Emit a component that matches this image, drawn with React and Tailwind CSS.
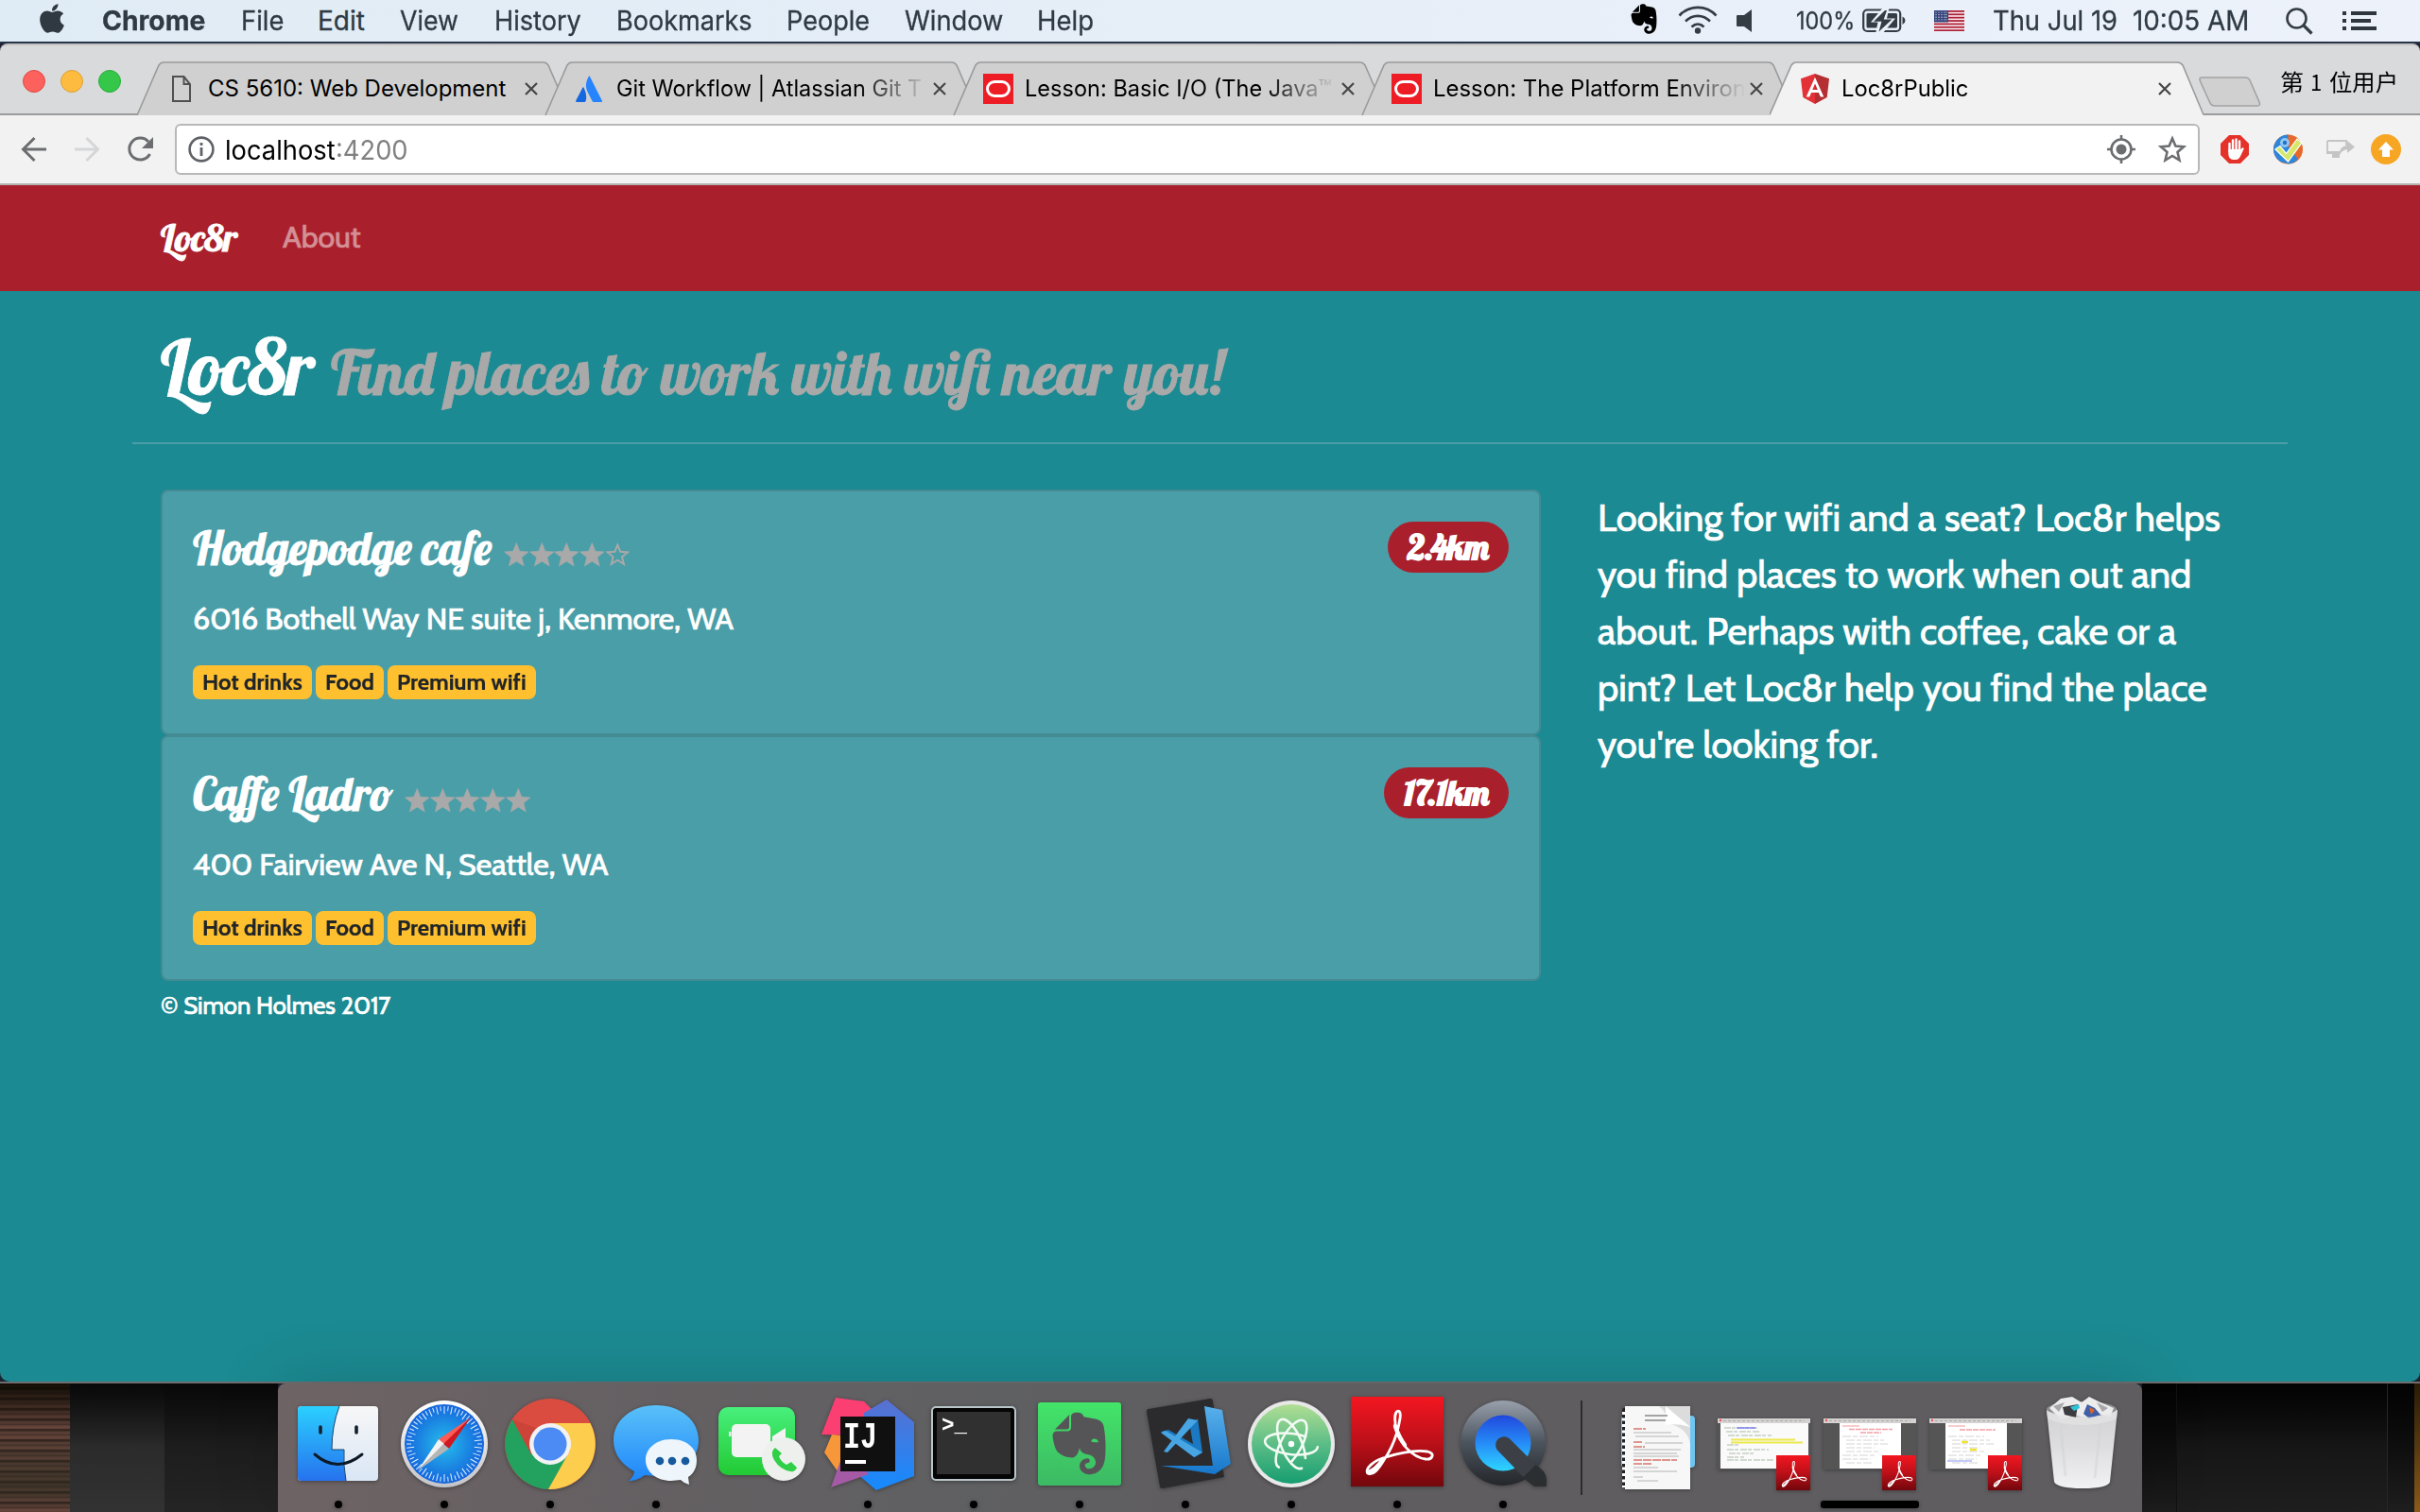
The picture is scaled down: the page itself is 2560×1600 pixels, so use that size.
import React, { useLayoutEffect, useRef, useState } from "react";
import { FaApple, FaEvernote } from "react-icons/fa";

/* Single line of text whose glyphs are condensed or widened to fill a given width. */
function Fit({ w, className = "", children }) {
  const ref = useRef(null);
  const [k, setK] = useState(1);
  useLayoutEffect(() => {
    setK(w / ref.current.offsetWidth);
  }, [w, children]);
  return (
    <span className={"inline-block shrink-0 whitespace-pre " + className} style={{ width: w }}>
      <span ref={ref} className="inline-block origin-left whitespace-pre" style={{ transform: `scaleX(${k})` }}>
        {children}
      </span>
    </span>
  );
}

const script = "font-['Lobster','Liberation_Serif',serif] [-webkit-text-stroke:0.8px_currentColor]";

/* ---------- menu bar ---------- */
const menus = [
  ["File", 45, "ml-[38px]"],
  ["Edit", 50, "ml-[36px]"],
  ["View", 62, "ml-[37px]"],
  ["History", 92, "ml-[38px]"],
  ["Bookmarks", 144, "ml-[37px]"],
  ["People", 88, "ml-[36px]"],
  ["Window", 104, "ml-[37px]"],
  ["Help", 60, "ml-[36px]"],
];

function MenuBar() {
  return (
    <div className="flex h-[46px] shrink-0 items-start border-b-2 border-[#26344a] bg-gradient-to-r from-[#e0ecf5] via-[#e6eef8] to-[#edf2fa] text-[28px] leading-[44px] text-[#2f3a44] [-webkit-text-stroke:0.3px_currentColor]">
      <FaApple className="ml-[38px] mt-[2px] h-[35px] w-[34px] text-[#303942]" />
      <Fit w={109} className="ml-[36px] font-bold">Chrome</Fit>
      {menus.map(([t, w, m]) => (
        <Fit key={t} w={w} className={m}>{t}</Fit>
      ))}
      <div className="ml-auto flex items-start pr-[46px]">
        <FaEvernote className="mt-[2px] h-[36px] w-[32px] text-black" />
        <svg className="ml-[20px] mt-[6px] h-[30px] w-[42px]" viewBox="0 0 42 30" fill="none" stroke="#343c44" strokeWidth="2.6">
          <path d="M1.5 10.5C12-1 30-1 40.500 10.500M8 16.500c7.500-7.500 18.500-7.500 26 0M14.500 22.500c4-4 9-4 13 0" />
          <circle cx="21" cy="26.500" r="3.200" fill="#343c44" stroke="none" />
        </svg>
        <svg className="ml-[20px] mt-[10px] h-[24px] w-[17px]" viewBox="0 0 17 24"><path d="M0 7q0-1 1-1h7l8-6v24l-8-6H1q-1 0-1-1z" fill="#343c44" /></svg>
        <Fit w={62} className="ml-[46px] text-[25px]">100%</Fit>
        <svg className="ml-[8px] mt-[9px] h-[26px] w-[46px]" viewBox="0 0 46 26">
          <rect x="1.200" y="1.500" width="39" height="22.500" rx="4" fill="none" stroke="#343c44" strokeWidth="2.200" />
          <rect x="4.500" y="5" width="32.500" height="15.500" rx="1.500" fill="#343c44" />
          <path d="M42.500 8.500q3 1.500 3 4.300t-3 4.300z" fill="#343c44" />
          <path d="M22 -1 9 14.500h7.500L14 27h7l14-16.500h-9L28.500-1z" fill="#eaf1f9" />
          <path d="M24 2 12 13.800h8.500L17.500 24.500 31.500 11.500h-8.800L26 2z" fill="#343c44" />
        </svg>
        <svg className="ml-[30px] mt-[11px] h-[22px] w-[32px]" viewBox="0 0 32 22">
          <rect width="32" height="22" fill="#f7eef0" />
          {[0, 1, 2, 3, 4, 5, 6].map((i) => <rect key={i} y={i * 3.38} width="32" height="1.800" fill="#b0213a" />)}
          <rect width="15" height="12.500" fill="#34437b" />
          {[2, 4.6, 7.2, 9.8].map((y) => [2, 5, 8, 11, 13].map((x) => <circle key={x + "-" + y} cx={x} cy={y} r=".6" fill="#fff" />))}
        </svg>
        <Fit w={132} className="ml-[30px]">Thu Jul 19</Fit>
        <Fit w={123} className="ml-[16px]">10:05 AM</Fit>
        <svg className="ml-[39px] mt-[8px] h-[29px] w-[29px]" viewBox="0 0 29 29" fill="none" stroke="#343c44" strokeWidth="2.600">
          <circle cx="11.500" cy="11.500" r="10" /><path d="m18.500 18.500 9 9" strokeWidth="3.200" />
        </svg>
        <svg className="ml-[31px] mt-[12px] h-[20px] w-[36px]" viewBox="0 0 36 20" fill="#2f363e">
          <path d="M0 0h4v4H0zM9 0h27v4H9zM0 8h4v4H0zM9 8h21v4H9zM0 16h4v4H0zM9 16h27v4H9z" />
        </svg>
      </div>
    </div>
  );
}

/* ---------- browser chrome ---------- */
const DocIcon = () => (
  <svg className="ml-[6px] h-[28px] w-[20px]" viewBox="0 0 20 28" fill="none" stroke="#505050" strokeWidth="2"><path d="M1 1h11.500L19 9v18H1zM12.500 1v8H19" /></svg>
);
const AtlassianIcon = () => (
  <svg className="ml-[1px] h-[28px] w-[28px]" viewBox="0 0 28 28">
    <path d="M14.500 0C9 8 11 14 13 18l4.500 9q.5 1 1.500 1h8q1.500 0 .8-1.500z" fill="#2684ff" />
    <path d="M8.500 12.500q-.7-.8-1.300.4L.2 26.500Q-.3 28 1 28h8.300q.8 0 1.200-.8 2.200-6-2-14.700z" fill="#1467e0" />
  </svg>
);
const OracleIcon = () => (
  <svg className="h-[32px] w-[32px]" viewBox="0 0 32 32"><rect width="32" height="32" fill="#ee1c25" /><rect x="4.500" y="8.500" width="23" height="15" rx="7.500" fill="none" stroke="#fff" strokeWidth="3" /></svg>
);
const AngularIcon = () => (
  <svg className="ml-[1px] h-[32px] w-[30px]" viewBox="0 0 30 32">
    <path d="M15 0 0 5.300 2.300 25 15 32z" fill="#e23237" /><path d="m15 0 15 5.300L27.700 25 15 32z" fill="#b52e31" />
    <path d="M15 3.800 5.700 24.600h3.500l1.900-4.700h7.800l1.900 4.700h3.500zm0 6.700 2.800 6.500h-5.600z" fill="#fff" />
  </svg>
);
const Close = () => (
  <svg className="ml-[1px] h-[14px] w-[14px] shrink-0" viewBox="0 0 14 14" stroke="#454545" strokeWidth="2.200"><path d="m1 1 12 12M13 1 1 13" /></svg>
);

const tabs = [
  { title: "CS 5610: Web Development", w: 315, icon: <DocIcon /> },
  { title: "Git Workflow | Atlassian Git T", w: 323, icon: <AtlassianIcon />, fade: true },
  { title: "Lesson: Basic I/O (The Java™", w: 325, icon: <OracleIcon />, fade: true },
  { title: "Lesson: The Platform Environ", w: 331, icon: <OracleIcon />, fade: true },
  { title: "Loc8rPublic", w: 134, icon: <AngularIcon />, active: true },
];

function Tab({ title, w, icon, fade, active }) {
  return (
    <div className={"relative -mr-[28px] h-[57px] w-[460px] shrink-0 " + (active ? "z-10" : "")}>
      <svg className="absolute inset-0 h-[59px] w-[460px]" viewBox="0 0 460 59">
        <path d={active ? "M0 59V57L1 55 23 4Q25 1 28 1H431Q435 1 437 4L459 55V59Z" : "M1 57 24 4Q26 1 29 1H431Q434 1 436 4L459 57Z"} fill={active ? "#f2f2f2" : "#d0d0d0"} />
        <path d={active ? "M0 56.500 23 4Q25 1 28 1H431Q435 1 437 4L459 56.500" : "M1 57 24 4Q26 1 29 1H431Q434 1 436 4L459 57"} fill="none" stroke="#9b9b9b" strokeWidth="1.600" />
      </svg>
      <div className="relative flex h-[57px] items-center pl-[32px] text-[24px] leading-[57px] text-black">
        <span className="flex w-[32px] shrink-0">{icon}</span>
        <span className={"ml-[12px] flex w-[334px] overflow-hidden " + (fade ? "[mask-image:linear-gradient(to_right,#000_76%,transparent_99%)]" : "")}>
          <Fit w={w}>{title}</Fit>
        </span>
        <Close />
      </div>
    </div>
  );
}

function BrowserChrome() {
  return (
    <div className="shrink-0">
      <div className="flex h-[76px] items-start rounded-t-[8px] border-t-2 border-[#c2c0c0] bg-[#d9dadc] shadow-[inset_0_-2px_0_#9b9b9b]">
        <div className="mt-[26px] flex w-[144px] shrink-0 gap-[16px] pl-[24px]">
          <i className="h-[24px] w-[24px] rounded-full border border-[#e14942] bg-[#fc615d]" />
          <i className="h-[24px] w-[24px] rounded-full border border-[#dea034] bg-[#fdbc40]" />
          <i className="h-[24px] w-[24px] rounded-full border border-[#2aad3c] bg-[#34c749]" />
        </div>
        <div className="mt-[17px] flex">{tabs.map((t) => <Tab key={t.title} {...t} />)}</div>
        <svg className="ml-[22px] mt-[33px] h-[32px] w-[66px] shrink-0" viewBox="0 0 66 32"><path d="M3 1h46q4 0 5.500 4L64 27q1.500 4-2 4H17q-4 0-5.500-4L1.500 5Q0 1 3 1z" fill="#d0d0d0" stroke="#a2a2a2" strokeWidth="1.600" /></svg>
        <span className="ml-[20px] mt-[18px] flex font-['Noto_Sans_CJK_SC',sans-serif] text-[24px] leading-[40px] text-black">
          <Fit w={25}>第</Fit>
          <Fit w={12} className="ml-[7px]">1</Fit>
          <Fit w={73} className="ml-[8px]">位用户</Fit>
        </span>
      </div>
      <div className="flex h-[74px] items-center border-b-2 border-[#b4b2b2] bg-[#f2f2f2] pl-[22px]">
        <svg className="h-[28px] w-[28px]" viewBox="0 0 28 28" fill="none" stroke="#6b6d70" strokeWidth="3"><path d="M27 14H3M14.500 2 2.500 14l12 12" /></svg>
        <svg className="ml-[28px] h-[28px] w-[28px]" viewBox="0 0 28 28" fill="none" stroke="#d5d6d8" strokeWidth="3"><path d="M1 14h24M13.500 2l12 12-12 12" /></svg>
        <svg className="ml-[28px] h-[28px] w-[29px]" viewBox="0 0 29 28"><path d="M24.500 19A11.500 11.500 0 1 1 23 6" fill="none" stroke="#6b6d70" strokeWidth="3" /><path d="M28 1v12H16z" fill="#6b6d70" /></svg>
        <div className="ml-[22px] flex h-[54px] w-[2142px] items-center rounded-[6px] border-2 border-[#b8b8b8] bg-white pl-[12px] pr-[12px] text-[28px] leading-[50px] text-black">
          <svg className="h-[28px] w-[28px]" viewBox="0 0 28 28"><circle cx="14" cy="14" r="12.400" fill="none" stroke="#5f6368" strokeWidth="2.600" /><path d="M12.600 12h2.800v9h-2.800zM12.600 7h2.800v3h-2.800z" fill="#5f6368" /></svg>
          <Fit w={117} className="ml-[11px] pt-[2px]">localhost</Fit>
          <Fit w={77} className="pt-[2px] text-[#808080]">:4200</Fit>
          <svg className="ml-auto h-[30px] w-[30px]" viewBox="0 0 30 30" fill="none" stroke="#6b6d70" strokeWidth="2.600"><circle cx="15" cy="15" r="10.500" /><circle cx="15" cy="15" r="5.500" fill="#6b6d70" stroke="none" /><path d="M15 0v5M15 25v5M0 15h5M25 15h5" /></svg>
          <svg className="ml-[24px] h-[30px] w-[30px]" viewBox="0 0 30 30" fill="none" stroke="#6b6d70" strokeWidth="2.600"><path d="m15 3.500 3.400 8 8.600.8-6.500 5.700 2 8.500L15 22l-7.500 4.500 2-8.500L3 12.300l8.600-.8z" /></svg>
        </div>
        <svg className="ml-[22px] h-[30px] w-[30px]" viewBox="0 0 30 30">
          <path d="M9 0h12l9 9v12l-9 9H9l-9-9V9z" fill="#e4322b" />
          <path d="M9.500 9v8M13 5.500v10M16.500 4.500v11M20 6.500v12" stroke="#fff" strokeWidth="2.400" strokeLinecap="round" /><path d="M8.300 15h12.900l2.600-2 1 1.200-3.400 7.300q-2 4.500-5.400 4.500h-2.300q-5.400 0-5.400-6.500z" fill="#fff" />
        </svg>
        <svg className="ml-[25px] h-[32px] w-[33px]" viewBox="0 0 33 32">
          <circle cx="16.500" cy="16" r="15.500" fill="#e8672a" /><path d="M16.500.5a15.500 15.500 0 0 0-8 28.800L17 31.500q7-1 10-5L16 12z" fill="#2f86d8" />
          <circle cx="13" cy="9" r="5" fill="#8cc7f5" /><circle cx="13" cy="9" r="2.200" fill="#2b6fc0" />
          <path d="m3 16 5-3.500 6.500 8L26 5l5 4-14.500 20z" fill="#d6e86a" stroke="#fff" strokeWidth="1.200" />
        </svg>
        <svg className="ml-[24px] h-[20px] w-[30px]" viewBox="0 0 30 20"><path d="M1 1h20v5M1 1v13h13" fill="none" stroke="#c4c4c4" strokeWidth="1.800" /><path d="M0 12h15v3H0zM6 15h8v4H6zM13 17q0-10 9-11V1l8 6.500-8 6.500v-4q-6 1-9 7z" fill="#c4c4c4" /></svg>
        <svg className="ml-[17px] h-[32px] w-[32px]" viewBox="0 0 32 32"><circle cx="16" cy="16" r="16" fill="#f6a623" /><path d="m16 8 8 8.500h-4V24h-8v-7.500H8z" fill="#fff" /></svg>
      </div>
    </div>
  );
}

/* ---------- page ---------- */
const STAR = "m13.3 0.500 3.500 8.700 9.300.7-7.200 5.900 2.300 9.200-7.900-5-7.900 5 2.300-9.200L.5 9.900l9.300-.7z";

function Stars({ n }) {
  return (
    <span className="mt-[25px] flex">
      {[0, 1, 2, 3, 4].map((i) => (
        <svg key={i} className="h-[26px] w-[26.700px] shrink-0" viewBox="0 0 26.700 26"><path d={i < n ? STAR : "m13.3 2.700 2.900 7.100 7.700.6-5.900 4.900 1.900 7.500-6.600-4.100-6.600 4.100 1.900-7.500-5.900-4.900 7.700-.6z"} fill={i < n ? "#a9a9a9" : "none"} stroke="#a9a9a9" strokeWidth={i < n ? 0.6 : 2} /></svg>
      ))}
    </span>
  );
}

function Place({ name, nameBox, stars, dist, distBox, address }) {
  return (
    <div className="h-[260px] rounded-[8px] border-2 border-[#448b94] bg-[#4a9ea8] px-[32px] pt-[29px]">
      <div className="flex h-[60px] items-start">
        <h4 className={"whitespace-pre pt-px text-[48px] leading-[60px] " + nameBox + " " + script}>{name}</h4>
        <Stars n={stars} />
        <span className={"ml-auto mt-[3px] flex h-[54px] justify-center whitespace-pre rounded-full bg-[#a9202c] text-[36px] font-bold leading-[54px] " + distBox + " " + script}>{dist}</span>
      </div>
      <div className="mt-[22px] h-[48px] whitespace-pre text-[32px] leading-[48px]">{address}</div>
      <div className="mt-[25px] flex gap-[4px] text-[24px] font-bold leading-[35px] text-[#212529] [-webkit-text-stroke:0.2px_currentColor]">
        {[["Hot drinks", 106], ["Food", 52], ["Premium wifi", 137]].map(([t, w]) => (
          <span key={t} className="h-[36px] rounded-[8px] bg-[#fec02f] px-[10px]"><Fit w={w}>{t}</Fit></span>
        ))}
      </div>
    </div>
  );
}

const blurb = [
  "Looking for wifi and a seat? Loc8r helps",
  "you find places to work when out and",
  "about. Perhaps with coffee, cake or a",
  "pint? Let Loc8r help you find the place",
  "you're looking for.",
];

function Page() {
  return (
    <div className="h-[1266px] shrink-0 rounded-b-[10px] bg-[#1c8a92] font-['Cabin','Lato',sans-serif] text-white [-webkit-text-stroke:0.7px_currentColor]">
      <nav className="flex h-[112px] items-start bg-[#a9202c] pl-[170px]">
        <span className={"mt-[25px] w-[82px] whitespace-pre text-[40px] leading-[60px] " + script}>Loc8r</span>
        <span className="ml-[47px] mt-[25px] text-[32px] leading-[60px] text-[#d48f95]">About</span>
      </nav>
      <header className="mx-[140px] flex h-[162px] items-baseline border-b-2 border-[#4a9ea8] pl-[30px] pt-[32px]">
        <h1 className={"w-[180px] whitespace-pre text-[80px] leading-[96px] " + script}>Loc8r</h1>
        <small className={"whitespace-pre text-[64px] leading-[80px] text-[#a9a9a9] " + script}>Find places to work with wifi near you!</small>
      </header>
      <main className="flex px-[170px] pt-[48px]">
        <section className="w-[1460px] shrink-0">
          <Place name="Hodgepodge cafe" nameBox="w-[329px]" stars={4} dist="2.4km" distBox="w-[128px]" address="6016 Bothell Way NE suite j, Kenmore, WA" />
          <Place name="Caffe Ladro" nameBox="w-[224px]" stars={5} dist="17.1km" distBox="w-[132px]" address="400 Fairview Ave N, Seattle, WA" />
          <footer className="pt-[2px] text-[25.600px] leading-[48px]">© Simon Holmes 2017</footer>
        </section>
        <aside className="ml-[60px] flex flex-col whitespace-pre text-[40px] leading-[60px]">
          {blurb.map((t) => <span key={t}>{t}</span>)}
        </aside>
      </main>
    </div>
  );
}

/* ---------- dock ---------- */
function AcrobatMark() {
  return (
    <g fill="none" stroke="#fff" strokeLinecap="round" strokeLinejoin="round">
      <path d="M47 28C45 14 54 12 52 24C50 37 46 52 35 68C29 78 23 85 18 82C14 78 24 68 37 65C53 60 68 57 81 59C90 61 86 68 79 67C65 65 52 51 47 34Z" strokeWidth="2.800" />
      <path d="M47 32q4 12 10 20M18 81q8-2 16-14" strokeWidth="4.200" />
    </g>
  );
}

function Thumb({ x, kind }) {
  return (
    <g transform={`translate(${x} 1501)`}>
      <rect width="98" height="54" fill="#555" /><rect width="98" height="5" fill="#d6d2d2" /><circle cx="3" cy="2" r="1.200" fill="#e55" />
      <path d="M6 2.500h86" stroke="#aaa" strokeDasharray="3 2" />
      {kind === 0 ? <rect x="3" y="5" width="93" height="48" fill="#fafafa" /> : <rect x="17" y="5" width="65" height="48" fill="#fff" />}
      {kind === 0 ? (
        <g>
          <path d="M7 10h36M9 14h36M11 18h46M10 28h12M10 33h44M12 37h28M10 41h18M10 44h50" stroke="#a9bba9" strokeWidth="1" strokeDasharray="7 1 4 2" />
          <path d="M20 10h20" stroke="#6a6af0" strokeWidth="1.200" />
          <path d="M14 21.500h68v2H14zM14 24.500h76v2H14z" fill="#ece84e" />
        </g>
      ) : (
        <g>
          <path d="M20 8h18" stroke="#f09a9a" />
          <path d={kind === 1 ? "M27 11.500h46M39 15h22" : "M32 12h38"} stroke="#f2a0a6" strokeWidth="1.600" strokeDasharray="6 1" />
          <path d="M20 19h38M24 23h40M24 27h44M24 31h30M24 35h36M20 39h34M20 43h30M24 47h28" stroke="#d4d4d4" strokeDasharray="9 2 5 2" />
          {kind === 2 && <path d="M34 25h7M43 33h7" stroke="#f0e43a" strokeWidth="2.600" />}
          {kind === 2 && <path d="M19 45h26" stroke="#8a97f2" />}
        </g>
      )}
      <g transform="translate(62 39)"><rect width="36" height="37" fill="url(#acro)" /><g transform="scale(.37 .4)"><AcrobatMark /></g></g>
    </g>
  );
}

const ticks = Array.from({ length: 60 }, (_, i) => i);
const icons = [
  <g key="finder">
    <rect x="315" y="1488" width="85" height="79" rx="4" fill="url(#finderR)" />
    <path d="M359 1488h-40q-4 0-4 4v71q0 4 4 4h47q-3-16-2-33h-13q0-25 8-46z" fill="url(#finderL)" />
    <path d="M359 1488q-8 21-8 46h13q-1 17 2 33" fill="none" stroke="#16456f" strokeWidth="1" />
    <path d="M339 1510v6M377 1510v6" stroke="#11202c" strokeWidth="3.600" strokeLinecap="round" />
    <path d="M333 1539q24 21 50 0" fill="none" stroke="#0d1a26" strokeWidth="3" strokeLinecap="round" />
  </g>,
  <g key="safari">
    <circle cx="470" cy="1528" r="46" fill="url(#silver)" /><circle cx="470" cy="1528" r="42" fill="url(#safari)" />
    {ticks.map((i) => <path key={i} d={i % 2 ? "M470 1488v5" : "M470 1488v8"} stroke="#dff2ff" strokeWidth="1" transform={`rotate(${i * 6} 470 1528)`} />)}
    <path d="m498 1500-34 23 6 5z" fill="#ff5a54" /><path d="m498 1500-23 33-6-5z" fill="#cf1820" />
    <path d="m442 1556 22-33 6 5z" fill="#f2f2f2" /><path d="m442 1556 33-23-6-5z" fill="#b5b5b5" />
  </g>,
  <g key="chrome">
    <circle cx="582" cy="1528" r="48" fill="#db4c40" />
    <path d="M542 1502A48 48 0 0 0 580 1576L601 1541 562 1539Z" fill="#22a15f" />
    <path d="M624.500 1506A48 48 0 0 1 580 1576L603 1535 582 1506Z" fill="#fdcd4d" />
    <path d="M542 1502 562 1539 570 1512Z" fill="#c13d33" opacity=".6" />
    <circle cx="582" cy="1528" r="22" fill="#f2f2f2" /><circle cx="582" cy="1528" r="17.500" fill="#4c8bf4" />
  </g>,
  <g key="messages">
    <path d="M694 1487c26 0 45 16 45 37s-19 38-45 38l-12-1q-8 6-17 6 6-5 6-10c-13-7-22-18-22-33 0-21 19-37 45-37z" fill="url(#msg)" />
    <path d="M710 1523c16 0 27 9 27 22 0 8-3 14-9 18l1 8q-5-1-9-5l-10 1c-15 0-27-9-27-22s12-22 27-22z" fill="#eef5fb" />
    <circle cx="698" cy="1546" r="4.300" fill="#165a9e" /><circle cx="711" cy="1546" r="4.300" fill="#165a9e" /><circle cx="725" cy="1546" r="4.300" fill="#165a9e" />
  </g>,
  <g key="facetime">
    <rect x="760" y="1489" width="81" height="72" rx="10" fill="url(#green)" />
    <rect x="774" y="1507" width="41" height="35" rx="5" fill="#f3f3f3" /><path d="m817 1520 14-9v22h-14z" fill="#f3f3f3" /><rect x="771" y="1515" width="2.500" height="5" fill="#eee" />
    <circle cx="829" cy="1544" r="23" fill="#edf0ec" />
    <path d="M820 1532q-6 4-1 13 6 10 17 12 5 1 7-4l-6-6-5 3q-6-3-8-9l3-3z" fill="#30cf48" />
  </g>,
  <g key="intellij">
    <path d="m884 1479 30 4 24 24-36 12-33-1z" fill="#fc3f72" /><path d="m938 1481 29 24v57l-40 15-21-18 8-64z" fill="url(#ijblue)" />
    <path d="m880 1518-8 19 14 20 14-37z" fill="#f7973a" /><path d="m894 1532-15 42 40-14z" fill="#a45aa5" />
    <rect x="889" y="1499" width="58" height="58" fill="#101010" />
    <text x="892" y="1532" textLength="36" lengthAdjust="spacingAndGlyphs" className="fill-white font-['Liberation_Mono',monospace] text-[38px] font-bold">IJ</text>
    <rect x="894" y="1545" width="22" height="4" fill="#fff" />
  </g>,
  <g key="terminal">
    <rect x="986" y="1489" width="88" height="77" rx="4" fill="#050505" stroke="#b9c5c9" strokeWidth="2" /><rect x="991" y="1494" width="78" height="66" fill="#303030" />
    <text x="996" y="1515" textLength="27" lengthAdjust="spacingAndGlyphs" className="fill-white font-['Liberation_Mono',monospace] text-[23px] font-bold">&gt;_</text>
  </g>,
  <g key="evernote">
    <rect x="1098" y="1484" width="88" height="88" rx="3" fill="url(#evergreen)" />
    <FaEvernote x="1104" y="1490" size={75} color="#555558" />
  </g>,
  <g key="vscode">
    <path d="m1215 1491 65-11q3 0 3 3l12 80-65 12q-3 0-3-2l-14-79q0-3 2-3z" fill="#2b2b2d" />
    <path d="m1274 1488 19 4 9 57-17 11-57-9h55z" fill="url(#vs)" />
    <path d="m1228 1515 36 27 8-5-5-36-8 9 3 18-26-15z" fill="#1b78c2" /><path d="m1231 1536 26-35 10 2-32 34zM1228 1516l5-2 39 23-9 5z" fill="#47a5e4" />
  </g>,
  <g key="atom">
    <circle cx="1366" cy="1528" r="46" fill="#e8e8e8" /><circle cx="1366" cy="1528" r="42" fill="url(#atom)" />
    <g fill="none" stroke="#f2fbf3" strokeWidth="2.600" strokeLinecap="round">
      <ellipse cx="1366" cy="1528" rx="28" ry="11" transform="rotate(7 1366 1528)" strokeDasharray="110 20" /><ellipse cx="1366" cy="1528" rx="28" ry="11" transform="rotate(67 1366 1528)" strokeDasharray="116 12" /><ellipse cx="1366" cy="1528" rx="28" ry="11" transform="rotate(118 1366 1528)" strokeDasharray="112 18" />
    </g>
    <circle cx="1366" cy="1528" r="3.200" fill="#fff" />
  </g>,
  <g key="acrobat">
    <rect x="1429" y="1478" width="98" height="95" fill="url(#acro)" />
    <g transform="translate(1429 1477)"><AcrobatMark /></g>
  </g>,
  <g key="quicktime">
    <circle cx="1590" cy="1527" r="45" fill="url(#qtRing)" /><path d="m1588 1532 10-9 26 27q11 6 12 15v8h-13l-9-7z" fill="#2c2f32" />
    <circle cx="1590" cy="1527" r="29.500" fill="url(#qtBlue)" />
    <path d="M1583.500 1534a9 9 0 0 1 13-12l28 28-13 13z" fill="#3c4046" />
  </g>,
  null,
  <g key="notebook">
    <rect x="1715" y="1498" width="78" height="55" rx="4" fill="#6fc4f0" /><rect x="1716" y="1490" width="14" height="82" rx="2" fill="#222" />
    <path d="M1719 1488h41q28 10 28 34v54h-69z" fill="#f7f7f7" /><path d="M1755 1488h33v40q-3-18-25-22 2-10-8-18z" fill="#dcdcdc" /><path d="m1762 1488 26 22q-12-4-26-2z" fill="#fff" />
    <path d="M1718 1494v80" stroke="#fff" strokeWidth="4" strokeDasharray="3 3.500" />
    <path d="M1740 1498h24M1740 1503h22" stroke="#888" strokeWidth="1.400" />
    <path d="M1728 1512h13M1728 1526h10M1728 1531h12M1728 1545h46M1728 1549h20" stroke="#d6776e" strokeWidth="1.500" strokeDasharray="9 1" />
    <path d="M1728 1516h40M1730 1520h46M1740 1527h40M1728 1534h50M1728 1538h46M1728 1541h48M1728 1553h26M1728 1557h46M1728 1563h10M1732 1567h22" stroke="#b4b4b4" strokeWidth="1" />
  </g>,
  <Thumb key="w1" x={1817} kind={0} />,
  <Thumb key="w2" x={1929} kind={1} />,
  <Thumb key="w3" x={2041} kind={2} />,
  <g key="trash">
    <path d="M2165 1492q37-14 75 0l-8 76q-2 7-29 7t-30-7z" fill="url(#trash)" /><ellipse cx="2202" cy="1491" rx="37" ry="8" fill="#8e8e90" />
    <path d="m2168 1490 12-10 12-2 10 6 8-6 12 6 14 6-4 10-14-4-10 4-14-2-14 4z" fill="#ececec" /><path d="m2172 1488 6 6 6-10zM2218 1484l6 10 6-4z" fill="#a8a8aa" /><path d="m2182 1489 16-3-2 14-12-3z" fill="#3c3c40" /><path d="m2190 1489 9-3 1 4-6 3z" fill="#2fc4d8" /><path d="m2208 1486 8 4 6 7-12 4-6-5z" fill="#3e5fa8" /><path d="m2210 1489 6 3-4 5z" fill="#e0622a" />
    <path d="M2165 1493q37 14 75 0l-1 8q-14 7-37 7t-36-7z" fill="#e4e4e5" opacity=".7" />
    <path d="m2180 1510 5 52M2222 1508l-6 56" stroke="#d2d4d6" strokeWidth="3" opacity=".5" />
  </g>,
];

const G = ({ id, stops }) => (
  <linearGradient id={id} x1="0" y1="0" x2="0" y2="1">{stops.map((c, i) => <stop key={i} offset={i / (stops.length - 1)} stopColor={c} />)}</linearGradient>
);

function Dock() {
  return (
    <div className="relative flex w-[1972px] shrink-0 rounded-t-[8px] bg-[#5f5d60] bg-[linear-gradient(100deg,rgba(140,112,108,0.35)_0%,rgba(130,110,110,0.2)_16%,rgba(95,110,105,0.15)_38%,transparent_50%)] pl-[8px] shadow-[0_0_70px_rgba(0,0,0,0.16)]">
      <svg className="absolute h-0 w-0"><defs>
        <G id="finderL" stops={["#2bd0ff", "#2672ee"]} /><G id="finderR" stops={["#f7f7f8", "#d9e6f4"]} /><G id="silver" stops={["#fff", "#c4c4c8"]} />
        <radialGradient id="safari"><stop offset="0" stopColor="#25bdec" /><stop offset="1" stopColor="#1565dc" /></radialGradient>
        <G id="msg" stops={["#5ac1f9", "#1e86fa"]} /><G id="green" stops={["#48ef7c", "#22ca34"]} /><G id="ijblue" stops={["#5a70d0", "#148bff"]} /><G id="evergreen" stops={["#43e469", "#3cb964"]} />
        <G id="vs" stops={["#58b0ea", "#1877cc"]} /><G id="atom" stops={["#b2de94", "#5bbd86", "#169d70"]} /><G id="acro" stops={["#f31620", "#bd1019", "#72070c"]} /><G id="qtRing" stops={["#98a0ac", "#4b535d", "#24272a"]} /><G id="qtBlue" stops={["#2148dd", "#268bf7", "#2dd5ff"]} /><G id="trash" stops={["#d0d0d2", "#dddddf", "#f2f2f5"]} />
      </defs></svg>
      {icons.map((icon, i) =>
        icon === null ? (
          <div key={i} className="flex h-[136px] w-[54px] shrink-0 justify-center pt-[18px]"><i className="h-[100px] w-[2px] bg-[#2c2b2d]" /></div>
        ) : (
          <svg key={i} className="h-[136px] w-[112px] shrink-0 overflow-visible drop-shadow-[0_1px_2px_rgba(0,0,0,0.35)]" viewBox={`${302 + 112 * i - (i > 12 ? 58 : 0)} 1464 112 136`}>
            {icon}
            {i < 12 && i !== 4 && <circle cx={358 + 112 * i} cy="1592" r="4" fill="#000" />}
            {i === 15 && <rect x="1926" y="1588" width="104" height="8" rx="3" fill="#000" />}
          </svg>
        )
      )}
    </div>
  );
}

function Desktop() {
  return (
    <div className="flex h-[136px] shrink-0">
      <div className="w-[74px] shrink-0 bg-[#4a322a] bg-[linear-gradient(to_bottom,rgba(10,8,0,0.9)_0%,transparent_35%,rgba(40,42,30,0.6)_80%,transparent),repeating-linear-gradient(to_bottom,#5e3d34_0px,#6c4a40_3px,#2b1d18_5px,#61443a_8px,#45302a_11px)]" />
      <div className="w-[100px] shrink-0 bg-gradient-to-b from-[#080808] via-[#2b2b2b] to-[#323232]" />
      <div className="w-[120px] shrink-0 bg-gradient-to-b from-[#080808] via-[#1d1d1d] to-[#242424]" />
      <Dock />
      <div className="w-[36px] shrink-0 bg-gradient-to-b from-[#030303] to-[#1d1d1d]" />
      <div className="w-[224px] shrink-0 border-l border-r border-l-[#111] border-r-[#262626] bg-gradient-to-b from-[#030303] via-[#161616] to-[#1e1e1e]" />
      <div className="w-[28px] shrink-0 bg-gradient-to-b from-[#030303] to-[#1e1e1e]" />
      <div className="flex-1 bg-gradient-to-b from-[#2a1c06] to-[#8a5a1a]" />
    </div>
  );
}

export default function App() {
  return (
    <div className="flex h-[1600px] w-[2560px] flex-col overflow-hidden bg-[#1b2230] font-['Inter',sans-serif]">
      <MenuBar />
      <BrowserChrome />
      <Page />
      <div className="h-[2px] shrink-0 bg-[#6f6d6e]" />
      <Desktop />
    </div>
  );
}
